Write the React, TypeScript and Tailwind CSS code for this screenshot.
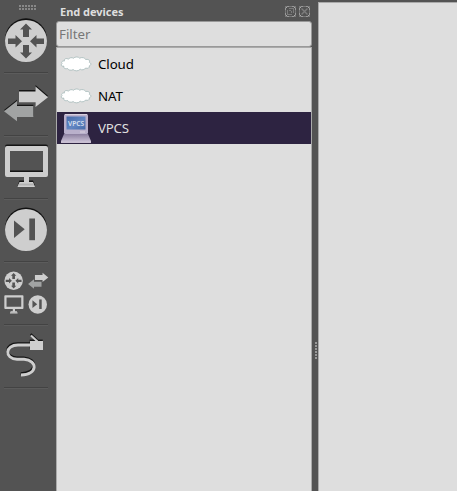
import React from "react";

const LIGHT = "#cecece";
const DARK = "#535353";

type Glyph = { flat?: boolean };

function Router({ flat = false }: Glyph) {
  return (
    <g>
      {!flat && <circle cx="26" cy="39.3" r="21" fill="#111" />}
      <circle cx="26" cy="41" r="21" fill={LIGHT} />
      <g fill={DARK}>
        {[0, 180].map((a) => (
          <path key={a} transform={`rotate(${a} 26 41)`} d="M26 23.500 32 29.500H29V37H23V29.500H20Z" />
        ))}
        <path d="M8 38.500H15.500V35L22 41.300 15.500 47.500V44H8Z" />
        <path d="M44 38.500H36.500V35L30 41.300 36.500 47.500V44H44Z" />
      </g>
    </g>
  );
}

function Arrows({ flat = false }: Glyph) {
  const right = "M19 91.5H35.5V86.5L48 97.2 35.5 107V102.2H19Z";
  const left = "M33.3 106V117H17V121.3L4 111.3 17 101V106Z";
  return (
    <g>
      {!flat && <path d={left} transform="translate(0 -1.3)" fill="#151515" />}
      <path d={left} fill="#a1a3a3" />
      {!flat && <path d={right} transform="translate(0 -1.5)" fill="#151515" />}
      <path d={right} fill={LIGHT} />
    </g>
  );
}

function Monitor({ flat = false }: Glyph) {
  const frame = "M7 146H46Q48 146 48 148V175Q48 177 46 177H29V182H33L35 187H17.5L19.5 182H24V177H7Q5 177 5 175V148Q5 146 7 146ZM10 151V172H43V151Z";
  return (
    <g fillRule="evenodd">
      {!flat && <path d={frame} transform="translate(0 -1.6)" fill="#151515" />}
      <path d={frame} fill={LIGHT} />
      <path d="M19 183.500H33.500L34.200 185.500H18.200Z" fill="#b3b3b3" />
    </g>
  );
}

function Skip({ flat = false }: Glyph) {
  return (
    <g>
      {!flat && <circle cx="26" cy="228.4" r="21" fill="#111" />}
      <circle cx="26" cy="230" r="21" fill={LIGHT} />
      <path d="M14 220.500 24.700 229.200 14 238Z" fill={DARK} />
      <rect x="29.3" y="218.5" width="5.7" height="21.7" fill={DARK} />
    </g>
  );
}

function Cable() {
  const wire = "M31 345H18C5 345 4 358.5 17 359.3H24C38 360 38 375 21 375";
  return (
    <g fill="none" strokeWidth="2.9">
      <g stroke="#151515" transform="translate(-.3 -1.4)">
        <path d={wire} />
        <path d="M31 335.500 37.500 341.500" strokeWidth="2" />
        <path d="M30 341H43V350H30Z" fill="#151515" stroke="none" />
      </g>
      <path d={wire} stroke={LIGHT} />
      <path d="M31 335.500 37.500 341.500" stroke={LIGHT} strokeWidth="2" />
      <path d="M30 341H43V350H30Z" fill={LIGHT} />
    </g>
  );
}

function Tool({ view, label, children }: { view: string; label: string; children: React.ReactNode }) {
  return (
    <button aria-label={label} className="relative block h-[63px] w-14 shrink-0">
      <svg viewBox={view} className="block h-[63px] w-14">{children}</svg>
      <span className="absolute bottom-0 left-1 h-px w-11 bg-[#434343] shadow-[0_1px_0_#5c5c5c]" />
    </button>
  );
}

function Grip() {
  return (
    <div className="grid h-[10px] w-14 grid-cols-[repeat(6,2px)] content-start justify-center gap-x-px gap-y-px pr-px pt-[5px]">
      {Array.from({ length: 12 }, (_, i) => <i key={i} className="h-[2px] w-[2px] bg-[#888]" />)}
    </div>
  );
}

function Cloud() {
  return (
    <svg viewBox="0 0 32 32" className="h-8 w-8 shrink-0">
      <path
        d="M4.500 13C3.600 10.800 6.500 9.800 8.500 11.200C9.200 9.400 12.500 9.200 13.300 10.300C15 8.400 18.800 8.700 19.600 10.200C21.500 9 25.300 9.500 25.600 11.500C28.500 10.800 30.500 12.500 29.200 14.200C31.500 15 31.300 17.400 29.300 17.800C30 20 27.500 20.900 25.600 20C24.800 22 21.500 22.300 20.200 21.200C18.800 23.300 14.500 23.300 13.200 21.600C11.300 22.800 8 22.200 7.600 20.500C5 21.200 3 19.800 4 18.200C1 18.600 .3 16.500 2.200 15.600C.7 14.200 2.200 12.700 4.500 13Z"
        fill="#fff" stroke="#a3b8b8" strokeWidth=".8"
      />
    </svg>
  );
}

function Pc() {
  return (
    <svg viewBox="0 0 32 32" className="h-8 w-8 shrink-0">
      <defs>
        <linearGradient id="base" x1="0" y1="0" x2="0" y2="1">
          <stop stopColor="#8c80a0" /><stop offset="1" stopColor="#d2c9dc" />
        </linearGradient>
        <linearGradient id="screen" x1="0" y1="0" x2="1" y2="1">
          <stop stopColor="#4569a8" /><stop offset=".55" stopColor="#6387c3" /><stop offset="1" stopColor="#456ba9" />
        </linearGradient>
      </defs>
      <path d="M4 22H28L31 29V31H1V29Z" fill="url(#base)" />
      <path d="M1 29.500H31V31H1Z" fill="#c9bfd2" />
      <rect x="4" y="2" width="24" height="20" rx="1.500" fill="#b9b0cb" />
      <path d="M5 2.500H27" stroke="#d8d0df" />
      <rect x="6.500" y="4.500" width="19" height="13" fill="url(#screen)" />
      <path d="M20 20H25" stroke="#d9d1df" />
      <text x="16" y="14" textAnchor="middle" fontFamily="Noto Sans, sans-serif" fontSize="6.300" fontWeight="600" fill="#d9e0ef" textLength="16" lengthAdjust="spacingAndGlyphs">VPCS</text>
    </svg>
  );
}

function TitleIcon({ close = false }: { close?: boolean }) {
  return (
    <svg viewBox="0 0 11 11" className="h-[11px] w-[11px]" fill="none">
      <rect x=".5" y=".5" width="10" height="10" stroke="#777" />
      <path d="M2 .5H4M7 .5H9M2 10.500H4M7 10.500H9M.5 2V4M.5 7V9M10.500 2V4M10.500 7V9" stroke="#999" />
      <path d="M1 1.500H2M9 1.500H10M1 9.500H2M9 9.500H10" stroke="#aaa" />
      {close ? (
        <path d="M2.500 2.500 8.500 8.500M8.500 2.500 2.500 8.500" stroke="#7d7d7d" strokeWidth="1.4" />
      ) : (
        <path d="M4 2.500H9M8.500 3V7M2.500 4V9M3 8.500H7M4 4.500H6M6.500 5V7" stroke="#7b7b7b" />
      )}
    </svg>
  );
}

function Device({ name, icon, selected = false }: { name: string; icon: React.ReactNode; selected?: boolean }) {
  return (
    <li className={`flex h-8 items-center gap-[6px] pl-[3px] text-[13.3px] ${selected ? "bg-[#2d2341] text-[#dfdfdf]" : "text-black"}`}>
      {icon}
      <span className={selected ? "pt-[2px] tracking-[-0.2px]" : "pt-[2px] tracking-[-0.1px]"}>{name}</span>
    </li>
  );
}

export default function App() {
  return (
    <main className="flex h-[491px] w-[457px] overflow-hidden bg-[#535353] font-['Noto_Sans','Open_Sans',sans-serif]">
      <nav className="flex w-14 shrink-0 flex-col">
        <Grip />
        <Tool view="0 10 56 63" label="Routers"><Router /></Tool>
        <Tool view="0 73 56 63" label="Switches"><Arrows /></Tool>
        <Tool view="0 136 56 63" label="End devices"><Monitor /></Tool>
        <Tool view="0 199 56 63" label="Security devices"><Skip /></Tool>
        <Tool view="0 262 56 63" label="All devices">
          <g transform="translate(2.200 262.700) scale(.44)"><Router flat /></g>
          <g transform="translate(26.200 232.900) scale(.46)"><Arrows flat /></g>
          <g transform="translate(2.100 230.200) scale(.445)"><Monitor flat /></g>
          <g transform="translate(26.300 203.300) scale(.44)"><Skip flat /></g>
        </Tool>
        <Tool view="0 325 56 63" label="Add a link"><Cable /></Tool>
      </nav>
      <section className="flex w-64 shrink-0 flex-col">
        <header className="flex h-[21px] items-center justify-between pl-1 pr-[2px] pt-[2px]">
          <h1 className="text-[11px] font-bold leading-none tracking-[-0.03px] text-[#dedede]">End devices</h1>
          <div className="flex gap-[3px]"><TitleIcon /><TitleIcon close /></div>
        </header>
        <input
          aria-label="Filter"
          placeholder="Filter"
          className="h-[26px] w-full shrink-0 rounded-[3px] border border-[#999] bg-[#dedede] px-[2px] text-[13.3px] placeholder:text-[#777]"
        />
        <ul className="flex-1 border-x border-t border-[#aaa] bg-[#dedede]">
          <Device name="Cloud" icon={<Cloud />} />
          <Device name="NAT" icon={<Cloud />} />
          <Device name="VPCS" icon={<Pc />} selected />
        </ul>
      </section>
      <div className="flex w-[6px] shrink-0 flex-col items-center justify-center gap-px pl-[2px] pt-[210px]">
        {Array.from({ length: 6 }, (_, i) => <i key={i} className="h-[2px] w-[2px] shrink-0 bg-[#999]" />)}
      </div>
      <div className="mt-[2px] flex-1 border-l border-t border-[#aaa] bg-[#dedede]" />
    </main>
  );
}
